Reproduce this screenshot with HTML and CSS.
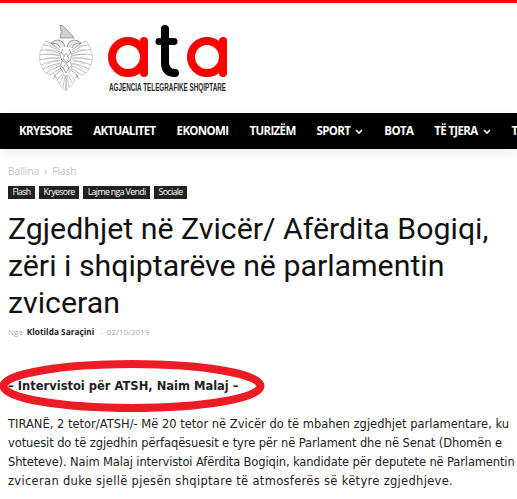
FILE: index.html
```html
<!DOCTYPE html>
<html lang="sq">
<head>
  <meta charset="UTF-8" />
  <meta name="viewport" content="width=device-width, initial-scale=1.0"/>
  <title>Zgjedhjet në Zvicër</title>
  <link rel="stylesheet" href="styles.css">
</head>
<body>

<header class="site-header">
  <a class="logo" href="#">
    <svg class="eagle" viewBox="0 0 54 66" width="54" height="66" aria-hidden="true">
      <defs>
        <filter id="soft"><feGaussianBlur stdDeviation="0.28"/></filter>
        <g id="eagleHalf" fill="none" stroke="#8d8d8d" stroke-width="0.55">
          <!-- head -->
          <path d="M26 22 Q25 16 19 15 Q15 15 12 18 L16 18.500 Q20 19 21 23" fill="#e4e4e4" stroke="#555"/>
          <path d="M12 18 L14 20.500" stroke="#555"/>
          <!-- long wing feathers -->
          <path d="M21 25 Q14 18 7 16 M21 27 Q12 20 4.500 20 M21 29 Q10 24 2 25 M21 31 Q9 28 .8 30 M21 33 Q9 32 .8 35 M21 35 Q10 36 2 40 M21 38 Q11 40 4 44 M21 41 Q13 44 7 48 M22 43 Q16 47 11 50"/>
          <path d="M7 16 Q5 18 4.500 20 Q2.500 22 2 25 Q.5 27 .8 30 Q0 33 .8 35 Q1 38 2 40 Q3 42 4 44 Q5 47 7 48 Q9 50 11 50" stroke="#aaa"/>
          <!-- inner feathers -->
          <path d="M20 24 Q16 21 11 20.500 M20 27 Q14 24 8 24.500 M20 30 Q13 28 6 29.500 M20 33 Q13 32 6 34.500 M20 36 Q14 36 8 39 M21 39 Q16 40 11 43" stroke="#b0b0b0"/>
          <!-- body -->
          <path d="M24 24 L21 30 L23 36 L21 42 L24 47 M27 28 L24 33 L27 38 L24 43 L27 48 M22 27 L26 32 M22 34 L26 38 M22 41 L26 45" stroke="#777"/>
          <!-- leg -->
          <path d="M22 45 L15 51 L18 53 M17 50 L14 54" stroke="#777"/>
          <!-- tail -->
          <path d="M25 47 L18 55 Q20 60 27 65.500 M25 49 L21 58 M26 50 L24 62 M27 50 V65" stroke="#999"/>
        </g>
      </defs>
      <g filter="url(#soft)">
        <path d="M21 0 L24 1 L27 4 L31 8 L34 11 L35 13 H21 Q23.500 7 21 0Z" fill="#cfcfcf" stroke="#808080" stroke-width="0.7"/>
        <use href="#eagleHalf"/>
        <use href="#eagleHalf" transform="matrix(-1 0 0 1 54 0)"/>
      </g>
    </svg>
    <svg class="wordmark" viewBox="0 0 122 72" width="122" height="72" role="img" aria-label="ata">
      <g fill="none" stroke-width="8" stroke-linecap="round">
        <circle cx="21" cy="33" r="16" stroke="#ff0000"/>
        <path d="M37 17 V49" stroke="#ff0000"/>
        <path d="M58 5 V38 Q58 49 68 49" stroke="#000"/>
        <path d="M52 17.500 H67" stroke="#000" stroke-width="7"/>
        <circle cx="100" cy="33" r="16" stroke="#ff0000"/>
        <path d="M116 17 V49" stroke="#ff0000"/>
      </g>
      <text class="tagline" x="2" y="67" textLength="117" lengthAdjust="spacingAndGlyphs">AGJENCIA TELEGRAFIKE SHQIPTARE</text>
    </svg>
  </a>
</header>

<nav class="main-nav">
  <a href="#">Kryesore</a>
  <a href="#">Aktualitet</a>
  <a href="#">Ekonomi</a>
  <a href="#">Turizëm</a>
  <a href="#">Sport<svg class="caret" viewBox="0 0 8 5" width="8" height="5"><path d="M1 1 L4 4 L7 1" fill="none" stroke="#fff" stroke-width="1.6"/></svg></a>
  <a href="#">Bota</a>
  <a href="#">Të tjera<svg class="caret" viewBox="0 0 8 5" width="8" height="5"><path d="M1 1 L4 4 L7 1" fill="none" stroke="#fff" stroke-width="1.6"/></svg></a>
  <a href="#">T</a>
</nav>

<main class="article">
  <div class="breadcrumb"><span>Ballina</span><span>›</span><span>Flash</span></div>
  <ul class="tags">
    <li>Flash</li>
    <li>Kryesore</li>
    <li>Lajme nga Vendi</li>
    <li>Sociale</li>
  </ul>
  <h1>Zgjedhjet në Zvicër/ Afërdita Bogiqi, zëri i shqiptarëve në parlamentin zviceran</h1>
  <div class="meta">
    <span>Nga</span>
    <strong>Klotilda Saraçini</strong>
    <span>-</span>
    <span>02/10/2019</span>
  </div>
  <div class="content">
    <div class="lead-wrap">
      <p class="lead"><strong>– Intervistoi për ATSH, Naim Malaj –</strong></p>
      <svg class="circled" viewBox="0 0 270 56" width="270" height="56" aria-hidden="true">
        <ellipse cx="132" cy="28" rx="128.500" ry="22" fill="none" stroke="#ed1c24" stroke-width="8"/>
      </svg>
    </div>
    <p class="body-text">
      <span class="line">TIRANË, 2 tetor/ATSH/- Më 20 tetor në Zvicër do të mbahen zgjedhjet parlamentare, ku</span>
      <span class="line line-2">votuesit do të zgjedhin përfaqësuesit e tyre për në Parlament dhe në Senat (Dhomën e</span>
      <span class="line line-3">Shteteve). Naim Malaj intervistoi Afërdita Bogiqin, kandidate për deputete në Parlamentin</span>
      <span class="line line-4">zviceran duke sjellë pjesën shqiptare të atmosferës së këtyre zgjedhjeve.</span>
    </p>
  </div>
</main>

</body>
</html>
```

FILE: styles.css
```css
html, body { margin: 0; padding: 0; overflow: hidden; }
body { width: 517px; height: 499px; background: #fff; font-family: "Open Sans", sans-serif; color: #111; }

.site-header { border-top: 3px solid #ff0000; height: 113px; box-sizing: border-box; padding: 21px 0 0 39px; }
.logo { display: flex; align-items: flex-start; gap: 14px; text-decoration: none; }
.eagle { flex: none; margin-top: 1px; }
.wordmark { flex: none; }
.tagline { font-family: "Liberation Sans", sans-serif; font-weight: 700; font-size: 11px; fill: #2a2a2a; }

.main-nav { display: flex; gap: 21px; height: 36px; align-items: center; background: #000; padding-left: 19px; white-space: nowrap; overflow: hidden; box-shadow: 0 4px 10px rgba(0,0,0,.07); }
.main-nav a { color: #fff; text-decoration: none; text-transform: uppercase; font-weight: 700; font-size: 11.500px; letter-spacing: -.65px; line-height: 36px; }
.caret { margin-left: 5px; vertical-align: 1px; }

.article { padding: 15px 0 0 8px; }
.breadcrumb { font-size: 10px; line-height: 14px; color: #c4c4c4; display: flex; gap: 5px; }
.tags { list-style: none; display: flex; gap: 4px; margin: 8px 0 0; padding: 0; }
.tags li { background: #222; color: #fff; font-size: 8.800px; letter-spacing: -.65px; line-height: 13px; padding: 0 4.500px; }
h1 { font-family: Roboto, sans-serif; font-weight: 400; font-size: 30.300px; line-height: 37px; color: #111; margin: 11px 0 0; width: 505px; }
.meta { display: flex; gap: 4px; font-size: 8px; line-height: 12px; color: #aaa; margin-top: 5px; }
.meta strong { color: #222; font-weight: 700; font-size: 8.300px; margin-right: 2px; }

.content { font-family: "DejaVu Sans", Verdana, sans-serif; font-size: 11.500px; line-height: 19px; color: #222; margin-top: 20px; }
.content p { margin: 0; }
.line { display: block; white-space: nowrap; }
.line-2 { letter-spacing: -.1px; }
.line-3 { letter-spacing: -.13px; }
.line-4 { letter-spacing: .31px; }
.lead-wrap { position: relative; height: 56px; margin-left: -8px; padding-left: 8px; display: flex; align-items: center; margin-bottom: 1px; }
.circled { position: absolute; left: 0; top: 0; }
```
